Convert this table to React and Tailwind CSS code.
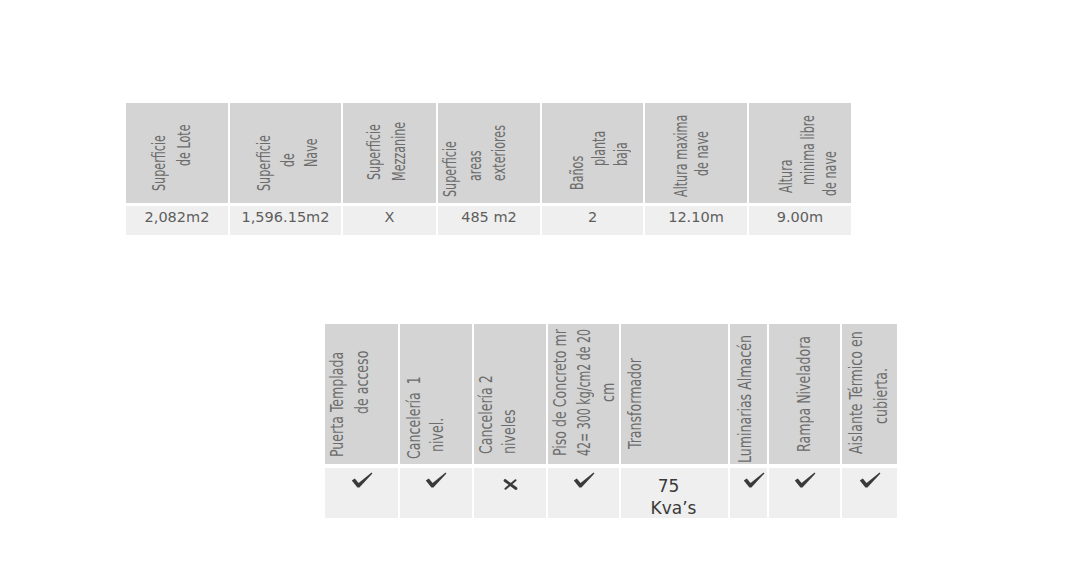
const lotHeaders = [
  {
    w: "w-[102px]",
    box: "ml-[21px] leading-[25px]",
    lines: [
      ["Superficie", "pt-[12px]"],
      ["de Lote", "pt-[37px]"],
    ],
    value: "2,082m2",
  },
  {
    w: "w-[111px]",
    box: "ml-[23px] leading-[23.5px]",
    lines: [
      ["Superficie", "pt-[12px]"],
      ["de", "pt-[36px]"],
      ["Nave", "pt-[36px]"],
    ],
    value: "1,596.15m2",
  },
  {
    w: "w-[93px]",
    box: "ml-[19px] leading-[25px]",
    lines: [
      ["Superficie", "pt-[23px]"],
      ["Mezzanine", "pt-[22px]"],
    ],
    value: "X",
  },
  {
    w: "w-[102px]",
    box: "ml-[0px] leading-[24.5px]",
    lines: [
      ["Superficie", "pt-[6px]"],
      ["areas", "pt-[22px]"],
      ["exteriores", "pt-[22px]"],
    ],
    value: "485 m2",
  },
  {
    w: "w-[101px]",
    box: "ml-[24px] leading-[22px]",
    lines: [
      ["Baños", "pt-[13px]"],
      ["planta", "pt-[37px]"],
      ["baja", "pt-[37px]"],
    ],
    value: "2",
  },
  {
    w: "w-[102px]",
    box: "ml-[26px] leading-[21px]",
    lines: [
      ["Altura maxima", "pt-[6px]"],
      ["de nave", "pt-[27px]"],
    ],
    value: "12.10m",
  },
  {
    w: "w-[102px]",
    box: "ml-[26px] leading-[22px]",
    lines: [
      ["Altura", "pt-[10px]"],
      ["minima libre", "pt-[18px]"],
      ["de nave", "pt-[7px]"],
    ],
    value: "9.00m",
  },
];

const amenityHeaders = [
  {
    w: "w-[73px]",
    box: "ml-[0px] leading-[25px]",
    lines: [
      ["Puerta Templada", "pt-[7px]"],
      ["de acceso", "pt-[50px]"],
    ],
    mark: "check",
  },
  {
    w: "w-[72px]",
    box: "ml-[3px] leading-[23px]",
    lines: [
      ["Cancelería  1", "pt-[5px]"],
      ["nivel.", "pt-[12px]"],
    ],
    mark: "check",
  },
  {
    w: "w-[72px]",
    box: "ml-[1px] leading-[23px]",
    lines: [
      ["Cancelería 2", "pt-[10px]"],
      ["niveles", "pt-[10px]"],
    ],
    mark: "cross",
  },
  {
    w: "w-[71px]",
    box: "ml-[0px] leading-[24px]",
    lines: [
      ["Piso de Concreto mr", "pt-[8px]"],
      ["42= 300 kg/cm2 de 20", "pt-[8px]", "scale-y-[0.7]"],
      ["cm", "pt-[62px]"],
    ],
    mark: "check",
  },
  {
    w: "w-[107px]",
    box: "ml-[2px] leading-[24px]",
    lines: [["Transformador", "pt-[15px]"]],
    mark: "kva",
  },
  {
    w: "w-[37px]",
    box: "ml-[3px] leading-[24px]",
    lines: [["Luminarias Almacén", "pt-[1px]"]],
    mark: "check-end",
  },
  {
    w: "w-[71px]",
    box: "ml-[23px] leading-[24px]",
    lines: [["Rampa Niveladora", "pt-[12px]"]],
    mark: "check",
  },
  {
    w: "w-[55px]",
    box: "ml-[2px] leading-[25px]",
    lines: [
      ["Aislante Térmico en", "pt-[10px]"],
      ["cubierta.", "pt-[40px]"],
    ],
    mark: "check",
  },
];

function Check() {
  return (
    <svg width="22" height="16" viewBox="0 0 22 16" className="mt-[4px]">
      <path
        d="M0.8 8.4 L3.8 6.6 L7.6 10.9 L20.6 0.6 L21.4 1.4 L8.4 15.4 L6.4 15.4 Z"
        fill="#3a3a3a"
      />
    </svg>
  );
}

function Cross() {
  return (
    <svg width="15" height="11" viewBox="0 0 15 11" className="mt-[11px]">
      <path d="M2 1.5 L13 9.5" stroke="#3a3a3a" strokeWidth="2.8" strokeLinecap="round" />
      <path d="M12.5 1.2 L2.5 9.8" stroke="#3a3a3a" strokeWidth="2" strokeLinecap="round" />
    </svg>
  );
}

function HeaderCell({ w, box, lines, squeeze }) {
  return (
    <div className={`flex h-full shrink-0 bg-[#d4d4d4] ${w}`}>
      <div className={`h-full rotate-180 whitespace-pre [writing-mode:vertical-rl] ${box}`}>
        {lines.map(([text, pad, own]) => (
          <div key={text} className={pad}>
            <div className={`origin-top ${own || squeeze}`}>{text}</div>
          </div>
        ))}
      </div>
    </div>
  );
}

function MarkCell({ w, mark }) {
  if (mark === "kva") {
    return (
      <div className={`shrink-0 bg-[#efefef] pt-[7px] text-center text-[17px] leading-[22px] text-[#3a3a3a] ${w}`}>
        <div className="pr-[12px]">75</div>
        <div className="pr-[2px]">Kva’s</div>
      </div>
    );
  }
  return (
    <div
      className={`flex shrink-0 bg-[#efefef] ${mark === "check-end" ? "justify-end pr-[2px]" : "justify-center"} ${w}`}
    >
      {mark === "cross" ? <Cross /> : <Check />}
    </div>
  );
}

export default function App() {
  return (
    <div className="min-h-[566px] w-[1080px] bg-white pl-[126px] pt-[103px] font-['Liberation_Sans_Narrow','DejaVu_Sans_Condensed','Liberation_Sans',sans-serif]">
      <div className="flex w-max flex-col gap-[3px]">
        <div className="flex h-[100px] gap-[2px] text-[17px] text-[#6c6c6c]">
          {lotHeaders.map((h) => (
            <HeaderCell key={h.value} squeeze="scale-y-[0.73]" {...h} />
          ))}
        </div>
        <div className="flex h-[29px] gap-[2px] font-['DejaVu_Sans',sans-serif] text-[14.5px] leading-[18px] text-[#5e5e5e]">
          {lotHeaders.map((h) => (
            <div key={h.value} className={`shrink-0 bg-[#efefef] pt-[2px] text-center ${h.w}`}>
              {h.value}
            </div>
          ))}
        </div>
      </div>

      <div className="ml-[199px] mt-[89px] flex w-max flex-col gap-[4px]">
        <div className="flex h-[140px] gap-[2px] text-[17.5px] text-[#6c6c6c]">
          {amenityHeaders.map((h) => (
            <HeaderCell key={h.lines[0][0]} squeeze="scale-y-[0.8]" {...h} />
          ))}
        </div>
        <div className="flex h-[50px] gap-[2px] font-['DejaVu_Sans',sans-serif]">
          {amenityHeaders.map((h) => (
            <MarkCell key={h.lines[0][0]} {...h} />
          ))}
        </div>
      </div>
    </div>
  );
}
